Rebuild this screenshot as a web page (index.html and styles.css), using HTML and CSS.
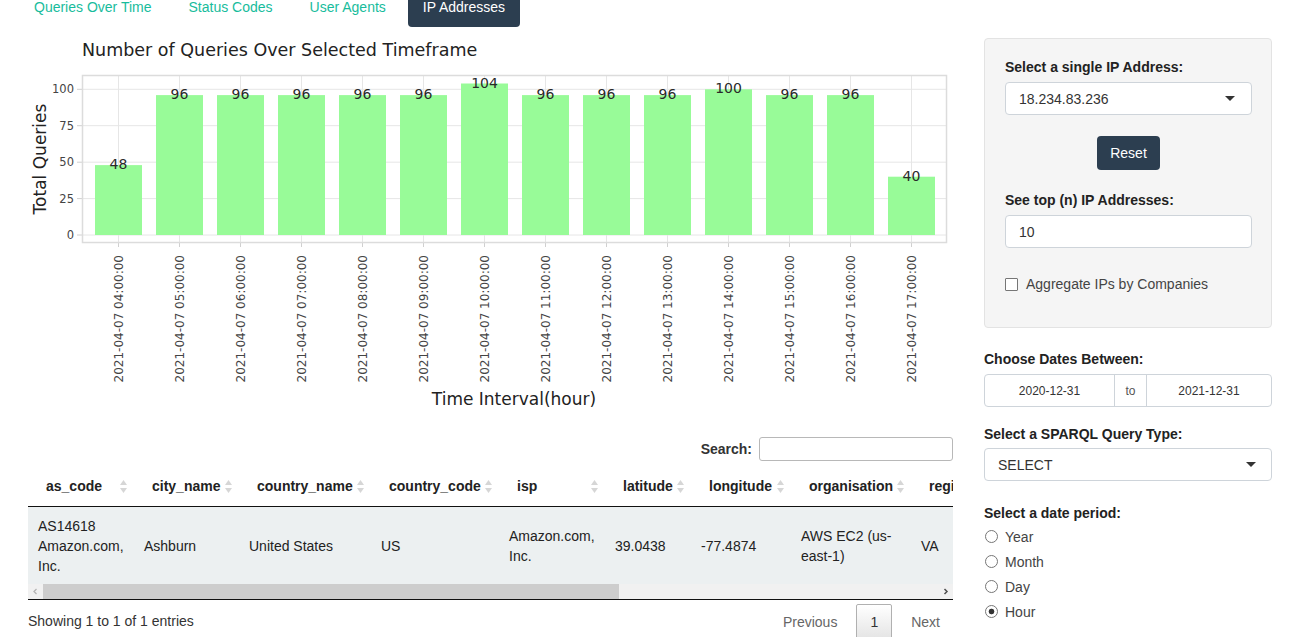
FILE: index.html
```html
<!DOCTYPE html>
<html lang="en">
<head>
<meta charset="utf-8">
<title>IP Addresses</title>
<link rel="stylesheet" href="styles.css">
</head>
<body>
<div class="page">
  <main class="main">
    <ul class="tabs">
      <li class="tab">Queries Over Time</li>
      <li class="tab">Status Codes</li>
      <li class="tab">User Agents</li>
      <li class="tab active">IP Addresses</li>
    </ul>

    <svg class="chart" viewBox="0 0 925 395" xmlns="http://www.w3.org/2000/svg">
      <g transform="translate(-28,-27)">
        <text class="ttl" x="82" y="56">Number of Queries Over Selected Timeframe</text>
        <g class="grid">
          <line x1="82" y1="235" x2="946" y2="235"/>
          <line x1="82" y1="198.6" x2="946" y2="198.6"/>
          <line x1="82" y1="162.2" x2="946" y2="162.2"/>
          <line x1="82" y1="125.7" x2="946" y2="125.7"/>
          <line x1="82" y1="89.3" x2="946" y2="89.3"/>
          <line x1="118.5" y1="75" x2="118.5" y2="242"/>
          <line x1="179.5" y1="75" x2="179.5" y2="242"/>
          <line x1="240.5" y1="75" x2="240.5" y2="242"/>
          <line x1="301.5" y1="75" x2="301.5" y2="242"/>
          <line x1="362.5" y1="75" x2="362.5" y2="242"/>
          <line x1="423.5" y1="75" x2="423.5" y2="242"/>
          <line x1="484.5" y1="75" x2="484.5" y2="242"/>
          <line x1="545.5" y1="75" x2="545.5" y2="242"/>
          <line x1="606.5" y1="75" x2="606.5" y2="242"/>
          <line x1="667.5" y1="75" x2="667.5" y2="242"/>
          <line x1="728.5" y1="75" x2="728.5" y2="242"/>
          <line x1="789.5" y1="75" x2="789.5" y2="242"/>
          <line x1="850.5" y1="75" x2="850.5" y2="242"/>
          <line x1="911.5" y1="75" x2="911.5" y2="242"/>
        </g>
        <g class="ticks">
          <line x1="77" y1="235" x2="82" y2="235"/>
          <line x1="77" y1="198.6" x2="82" y2="198.6"/>
          <line x1="77" y1="162.2" x2="82" y2="162.2"/>
          <line x1="77" y1="125.7" x2="82" y2="125.7"/>
          <line x1="77" y1="89.3" x2="82" y2="89.3"/>
          <line x1="118.5" y1="242" x2="118.5" y2="247"/>
          <line x1="179.5" y1="242" x2="179.5" y2="247"/>
          <line x1="240.5" y1="242" x2="240.5" y2="247"/>
          <line x1="301.5" y1="242" x2="301.5" y2="247"/>
          <line x1="362.5" y1="242" x2="362.5" y2="247"/>
          <line x1="423.5" y1="242" x2="423.5" y2="247"/>
          <line x1="484.5" y1="242" x2="484.5" y2="247"/>
          <line x1="545.5" y1="242" x2="545.5" y2="247"/>
          <line x1="606.5" y1="242" x2="606.5" y2="247"/>
          <line x1="667.5" y1="242" x2="667.5" y2="247"/>
          <line x1="728.5" y1="242" x2="728.5" y2="247"/>
          <line x1="789.5" y1="242" x2="789.5" y2="247"/>
          <line x1="850.5" y1="242" x2="850.5" y2="247"/>
          <line x1="911.5" y1="242" x2="911.5" y2="247"/>
        </g>
        <g class="bars">
          <rect x="95" y="165.1" width="47" height="69.9"/>
          <rect x="156" y="95.1" width="47" height="139.9"/>
          <rect x="217" y="95.1" width="47" height="139.9"/>
          <rect x="278" y="95.1" width="47" height="139.9"/>
          <rect x="339" y="95.1" width="47" height="139.9"/>
          <rect x="400" y="95.1" width="47" height="139.9"/>
          <rect x="461" y="83.5" width="47" height="151.5"/>
          <rect x="522" y="95.1" width="47" height="139.9"/>
          <rect x="583" y="95.1" width="47" height="139.9"/>
          <rect x="644" y="95.1" width="47" height="139.9"/>
          <rect x="705" y="89.3" width="47" height="145.7"/>
          <rect x="766" y="95.1" width="47" height="139.9"/>
          <rect x="827" y="95.1" width="47" height="139.9"/>
          <rect x="888" y="176.7" width="47" height="58.3"/>
        </g>
        <rect class="frame" x="82.5" y="75.5" width="864" height="167"/>
        <g class="vals">
          <text x="118.5" y="169">48</text>
          <text x="179.5" y="99">96</text>
          <text x="240.5" y="99">96</text>
          <text x="301.5" y="99">96</text>
          <text x="362.5" y="99">96</text>
          <text x="423.5" y="99">96</text>
          <text x="484.5" y="88">104</text>
          <text x="545.5" y="99">96</text>
          <text x="606.5" y="99">96</text>
          <text x="667.5" y="99">96</text>
          <text x="728.5" y="93">100</text>
          <text x="789.5" y="99">96</text>
          <text x="850.5" y="99">96</text>
          <text x="911.5" y="181">40</text>
        </g>
        <g class="ylab">
          <text x="74" y="239">0</text>
          <text x="74" y="202.6">25</text>
          <text x="74" y="166.2">50</text>
          <text x="74" y="129.7">75</text>
          <text x="74" y="93.3">100</text>
        </g>
        <g class="xlab">
          <text transform="translate(123,255) rotate(-90)">2021-04-07 04:00:00</text>
          <text transform="translate(184,255) rotate(-90)">2021-04-07 05:00:00</text>
          <text transform="translate(245,255) rotate(-90)">2021-04-07 06:00:00</text>
          <text transform="translate(306,255) rotate(-90)">2021-04-07 07:00:00</text>
          <text transform="translate(367,255) rotate(-90)">2021-04-07 08:00:00</text>
          <text transform="translate(428,255) rotate(-90)">2021-04-07 09:00:00</text>
          <text transform="translate(489,255) rotate(-90)">2021-04-07 10:00:00</text>
          <text transform="translate(550,255) rotate(-90)">2021-04-07 11:00:00</text>
          <text transform="translate(611,255) rotate(-90)">2021-04-07 12:00:00</text>
          <text transform="translate(672,255) rotate(-90)">2021-04-07 13:00:00</text>
          <text transform="translate(733,255) rotate(-90)">2021-04-07 14:00:00</text>
          <text transform="translate(794,255) rotate(-90)">2021-04-07 15:00:00</text>
          <text transform="translate(855,255) rotate(-90)">2021-04-07 16:00:00</text>
          <text transform="translate(916,255) rotate(-90)">2021-04-07 17:00:00</text>
        </g>
        <text class="axt" transform="translate(46,159) rotate(-90)">Total Queries</text>
        <text class="axt" x="514" y="404.5">Time Interval(hour)</text>
      </g>
    </svg>

    <div class="dt">
      <div class="dt-search">
        <label class="dt-label" for="q">Search:</label>
        <input id="q" class="dt-input" type="search">
      </div>
      <div class="dt-scroll">
        <table class="dt-table">
          <colgroup>
            <col class="c1"><col class="c2"><col class="c3"><col class="c4"><col class="c5"><col class="c6"><col class="c7"><col class="c8"><col class="c9">
          </colgroup>
          <thead>
            <tr>
              <th><div class="th"><span>as_code</span><svg class="sort" viewBox="0 0 7 13"><polygon points="0,5 3.5,0 7,5"/><polygon points="0,8 3.5,13 7,8"/></svg></div></th>
              <th><div class="th"><span>city_name</span><svg class="sort" viewBox="0 0 7 13"><polygon points="0,5 3.5,0 7,5"/><polygon points="0,8 3.5,13 7,8"/></svg></div></th>
              <th><div class="th"><span>country_name</span><svg class="sort" viewBox="0 0 7 13"><polygon points="0,5 3.5,0 7,5"/><polygon points="0,8 3.5,13 7,8"/></svg></div></th>
              <th><div class="th"><span>country_code</span><svg class="sort" viewBox="0 0 7 13"><polygon points="0,5 3.5,0 7,5"/><polygon points="0,8 3.5,13 7,8"/></svg></div></th>
              <th><div class="th"><span>isp</span><svg class="sort" viewBox="0 0 7 13"><polygon points="0,5 3.5,0 7,5"/><polygon points="0,8 3.5,13 7,8"/></svg></div></th>
              <th><div class="th"><span>latitude</span><svg class="sort" viewBox="0 0 7 13"><polygon points="0,5 3.5,0 7,5"/><polygon points="0,8 3.5,13 7,8"/></svg></div></th>
              <th><div class="th"><span>longitude</span><svg class="sort" viewBox="0 0 7 13"><polygon points="0,5 3.5,0 7,5"/><polygon points="0,8 3.5,13 7,8"/></svg></div></th>
              <th><div class="th"><span>organisation</span><svg class="sort" viewBox="0 0 7 13"><polygon points="0,5 3.5,0 7,5"/><polygon points="0,8 3.5,13 7,8"/></svg></div></th>
              <th><div class="th"><span>region</span><svg class="sort" viewBox="0 0 7 13"><polygon points="0,5 3.5,0 7,5"/><polygon points="0,8 3.5,13 7,8"/></svg></div></th>
            </tr>
          </thead>
          <tbody>
            <tr>
              <td>AS14618 Amazon.com, Inc.</td>
              <td>Ashburn</td>
              <td>United States</td>
              <td>US</td>
              <td>Amazon.com, Inc.</td>
              <td>39.0438</td>
              <td>-77.4874</td>
              <td>AWS EC2 (us-east-1)</td>
              <td>VA</td>
            </tr>
          </tbody>
        </table>
        <div class="hscroll">
          <svg class="sb-arrow" viewBox="0 0 15 15"><polyline points="8.5,5 6,7.5 8.5,10" fill="none" stroke="#b5b5b5" stroke-width="1.3"/></svg>
          <div class="sb-track"><div class="sb-thumb"></div></div>
          <svg class="sb-arrow" viewBox="0 0 15 15"><polyline points="6.5,5 9,7.5 6.5,10" fill="none" stroke="#505050" stroke-width="1.5"/></svg>
        </div>
      </div>
      <div class="dt-foot">
        <div class="dt-info">Showing 1 to 1 of 1 entries</div>
        <div class="paging">
          <span class="pg">Previous</span>
          <span class="pg cur">1</span>
          <span class="pg">Next</span>
        </div>
      </div>
    </div>
  </main>

  <aside class="side">
    <div class="well">
      <div class="lbl">Select a single IP Address:</div>
      <div class="sel ip-sel"><span>18.234.83.236</span><i class="caret"></i></div>
      <div class="btn-row"><button class="btn" type="button">Reset</button></div>
      <div class="lbl lbl-top">See top (n) IP Addresses:</div>
      <div class="inp">10</div>
      <label class="chk"><input type="checkbox" class="box"><span>Aggregate IPs by Companies</span></label>
    </div>

    <div class="lbl sec1">Choose Dates Between:</div>
    <div class="daterange">
      <div class="d1">2020-12-31</div>
      <div class="to">to</div>
      <div class="d2">2021-12-31</div>
    </div>

    <div class="lbl sec2">Select a SPARQL Query Type:</div>
    <div class="sel q-sel"><span>SELECT</span><i class="caret"></i></div>

    <div class="lbl sec3">Select a date period:</div>
    <div class="radios">
      <label class="rad"><input type="radio" name="p" class="rb"><span>Year</span></label>
      <label class="rad"><input type="radio" name="p" class="rb"><span>Month</span></label>
      <label class="rad"><input type="radio" name="p" class="rb"><span>Day</span></label>
      <label class="rad"><input type="radio" name="p" class="rb" checked><span>Hour</span></label>
    </div>
  </aside>
</div>
</body>
</html>
```

FILE: styles.css
```css
* { box-sizing: border-box; }

html, body {
  margin: 0;
  padding: 0;
  background: #fff;
  overflow: hidden;
}

body {
  font-family: "Liberation Sans", Arial, sans-serif;
  font-size: 14px;
  line-height: 20px;
  color: #212529;
}

.page {
  display: flex;
  gap: 31px;
  padding-left: 28px;
  height: 637px;
}

.main {
  width: 925px;
  flex: none;
}

/* tabs */
.tabs {
  display: flex;
  gap: 7px;
  list-style: none;
  margin: -13px 0 0 -9px;
  padding: 0;
}

.tab {
  padding: 10px 15px;
  line-height: 20px;
  color: #18bc9c;
  border-radius: 4px;
}

.tab.active {
  background: #2c3e50;
  color: #fff;
}

/* chart */
.chart {
  display: block;
  width: 925px;
  height: 395px;
  font-family: "DejaVu Sans", Verdana, sans-serif;
}

.chart .ttl {
  font-size: 17.5px;
  fill: #222;
}

.chart .grid line {
  stroke: #e6e6e6;
  stroke-width: 1;
}

.chart .ticks line {
  stroke: #d0d0d0;
  stroke-width: 1;
}

.chart .frame {
  fill: none;
  stroke: #dcdcdc;
  stroke-width: 1.5;
}

.chart .bars rect {
  fill: #98fb98;
}

.chart .vals text {
  font-size: 14px;
  fill: #2a2a2a;
  text-anchor: middle;
}

.chart .ylab text {
  font-size: 11.5px;
  fill: #444;
  text-anchor: end;
}

.chart .xlab text {
  font-size: 12px;
  fill: #444;
  text-anchor: end;
}

.chart .axt {
  font-size: 17px;
  fill: #222;
  text-anchor: middle;
}

/* datatable */
.dt-search {
  display: flex;
  justify-content: flex-end;
  align-items: center;
  gap: 7px;
  margin-top: 15px;
  height: 24px;
}

.dt-label {
  font-weight: bold;
  color: #333;
}

.dt-input {
  width: 194px;
  height: 24px;
  border: 1px solid #b8b8b8;
  border-radius: 3px;
  padding: 0 4px;
  font: inherit;
}

.dt-scroll {
  margin-top: 5px;
  width: 925px;
  overflow: hidden;
  border-bottom: 1px solid #111;
}

.dt-table {
  border-collapse: collapse;
  table-layout: fixed;
  width: 983px;
}

.c1 { width: 106px; }
.c2 { width: 105px; }
.c3 { width: 132px; }
.c4 { width: 128px; }
.c5 { width: 106px; }
.c6 { width: 86px; }
.c7 { width: 100px; }
.c8 { width: 120px; }
.c9 { width: 100px; }

.dt-table th {
  padding: 10px 7px 10px 18px;
  font-weight: bold;
  text-align: left;
  line-height: 20px;
  color: #222;
  border-bottom: 1px solid #111;
  white-space: nowrap;
}

.th {
  display: flex;
  justify-content: space-between;
  align-items: center;
}

.sort {
  width: 7px;
  height: 13px;
  flex: none;
  fill: #d6d6d6;
}

.dt-table td {
  padding: 9px 10px 8px;
  line-height: 20px;
  background: #ecf0f1;
  vertical-align: middle;
  color: #222;
}

.hscroll {
  display: flex;
  height: 15px;
  background: #f1f1f1;
}

.sb-arrow {
  width: 15px;
  height: 15px;
  flex: none;
}

.sb-track {
  flex: 1;
  height: 15px;
}

.sb-thumb {
  width: 576px;
  height: 15px;
  background: #cdcdcd;
}

.dt-foot {
  display: flex;
  justify-content: space-between;
  align-items: flex-start;
  padding-top: 4px;
}

.dt-info {
  padding-top: 7px;
  color: #333;
}

.paging {
  display: flex;
  gap: 7px;
  margin-right: 1px;
}

.pg {
  padding: 7px 11px;
  color: #666;
  border: 1px solid transparent;
}

.pg.cur {
  padding: 7px 13px;
  color: #333;
  border: 1px solid #b0b0b0;
  border-radius: 2px;
  background: linear-gradient(to bottom, #fff 0%, #e4e4e4 100%);
}

/* sidebar */
.side {
  width: 288px;
  flex: none;
  padding-top: 38px;
}

.well {
  background: #f5f5f5;
  border: 1px solid #e3e3e3;
  border-radius: 4px;
  padding: 18px 19px 33px 20px;
}

.lbl {
  font-weight: bold;
  line-height: 20px;
  margin-bottom: 5px;
  color: #222;
}

.lbl-top { margin-top: 20px; }
.sec1 { margin-top: 21px; }
.sec2 { margin-top: 17px; margin-bottom: 4px; }
.sec3 { margin-top: 22px; margin-bottom: 1px; }

.sel {
  height: 33px;
  border: 1px solid #ced4da;
  border-radius: 4px;
  background: #fff;
  display: flex;
  align-items: center;
  justify-content: space-between;
  padding: 0 16px 0 13px;
  color: #333;
}

.q-sel {
  padding-right: 15px;
}

.caret {
  width: 0;
  height: 0;
  border-left: 5px solid transparent;
  border-right: 5px solid transparent;
  border-top: 5px solid #333;
}

.btn-row {
  display: flex;
  justify-content: center;
  margin-top: 21px;
}

.btn {
  width: 63px;
  height: 34px;
  border: none;
  border-radius: 4px;
  background: #2c3e50;
  color: #fff;
  font: inherit;
  padding: 0;
}

.inp {
  height: 33px;
  border: 1px solid #ced4da;
  border-radius: 4px;
  background: #fff;
  padding: 6px 13px;
  color: #333;
}

.chk {
  display: flex;
  align-items: center;
  gap: 8px;
  margin-top: 26px;
  line-height: 20px;
  color: #444;
}

.box {
  appearance: none;
  -webkit-appearance: none;
  margin: 0;
  width: 13px;
  height: 13px;
  border: 1px solid #767676;
  border-radius: 1px;
  background: #fff;
  flex: none;
}

.daterange {
  display: flex;
  height: 33px;
  border: 1px solid #ced4da;
  border-radius: 4px;
  background: #fff;
  font-size: 12px;
  color: #333;
}

.d1, .to, .d2 {
  display: flex;
  align-items: center;
  justify-content: center;
}

.d1 { width: 129px; }
.to {
  width: 33px;
  border-left: 1px solid #ced4da;
  border-right: 1px solid #ced4da;
  color: #555;
}
.d2 { flex: 1; }

.radios {
  display: flex;
  flex-direction: column;
}

.rad {
  display: flex;
  align-items: center;
  gap: 7px;
  height: 25px;
  color: #444;
}

.rb {
  appearance: none;
  -webkit-appearance: none;
  margin: 0 0 0 1px;
  width: 13px;
  height: 13px;
  border: 1px solid #767676;
  border-radius: 50%;
  background: #fff;
  flex: none;
}

.rb:checked {
  background: radial-gradient(circle, #333 0, #333 2.5px, #fff 3.2px);
}
```
